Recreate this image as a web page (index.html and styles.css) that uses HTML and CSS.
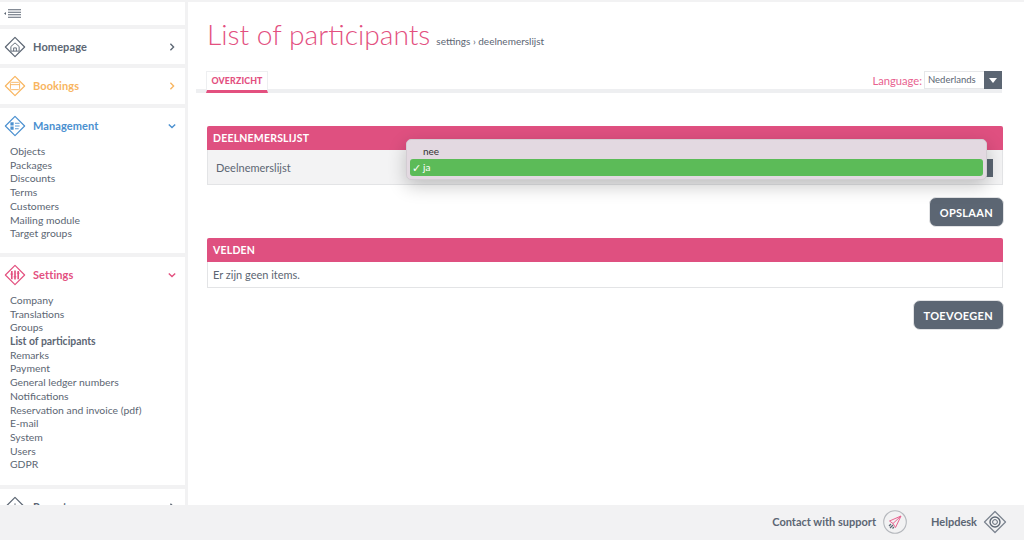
FILE: index.html
```html
<!DOCTYPE html>
<html lang="en">
<head>
<meta charset="utf-8">
<title>List of participants</title>
<link rel="stylesheet" href="styles.css">
</head>
<body>
<div class="app">
  <aside class="sidebar">
    <div class="toggle">
      <svg width="18" height="9" viewBox="0 0 18 9"><path d="M0 4.500l2-1.500v3z" fill="#5c6673"/><path d="M4 .7h13M4 3.200h13M4 5.700h13M4 8.200h13" stroke="#5c6673" stroke-width="1.100"/></svg>
    </div>
    <section class="nav-group home">
      <div class="nav-head">
        <svg class="nav-icon" viewBox="0 0 24 24"><path class="o" d="M12 1.500L22.500 12 12 22.500 1.500 12z"/><path class="i" d="M7.500 11.500L12 7.500l4.500 4v5h-9zM10.500 16.500v-3.500h3v3.500"/></svg>
        <span class="nav-title">Homepage</span>
        <svg class="chev" viewBox="0 0 8 10"><path d="M2 1l4 4-4 4"/></svg>
      </div>
    </section>
    <section class="nav-group book">
      <div class="nav-head">
        <svg class="nav-icon" viewBox="0 0 24 24"><path class="o" d="M12 1.500L22.500 12 12 22.500 1.500 12z"/><rect class="i" x="7" y="8" width="10" height="8" rx="1"/><path class="i" d="M7 10.500h10"/></svg>
        <span class="nav-title">Bookings</span>
        <svg class="chev" viewBox="0 0 8 10"><path d="M2 1l4 4-4 4"/></svg>
      </div>
    </section>
    <section class="nav-group manage">
      <div class="nav-head">
        <svg class="nav-icon" viewBox="0 0 24 24"><path class="o" d="M12 1.500L22.500 12 12 22.500 1.500 12z"/><path class="f" d="M7 8h3.500v3.500H7zM7 12.500h3.500V16H7z"/><path class="i" d="M12 9h5M12 12h5M12 15h4"/></svg>
        <span class="nav-title">Management</span>
        <svg class="chev" viewBox="0 0 10 8"><path d="M1 2l4 4 4-4"/></svg>
      </div>
      <ul class="nav-list">
        <li>Objects</li><li>Packages</li><li>Discounts</li><li>Terms</li><li>Customers</li><li>Mailing module</li><li>Target groups</li>
      </ul>
    </section>
    <section class="nav-group settings">
      <div class="nav-head">
        <svg class="nav-icon" viewBox="0 0 24 24"><path class="o" d="M12 1.500L22.500 12 12 22.500 1.500 12z"/><path class="i thick" d="M8.500 7.500v9M12 7v10M15.500 7.500v9"/><path class="i" d="M7 11h3M10.500 14h3M14 10h3"/></svg>
        <span class="nav-title">Settings</span>
        <svg class="chev" viewBox="0 0 10 8"><path d="M1 2l4 4 4-4"/></svg>
      </div>
      <ul class="nav-list">
        <li>Company</li><li>Translations</li><li>Groups</li><li class="current">List of participants</li><li>Remarks</li><li>Payment</li><li>General ledger numbers</li><li>Notifications</li><li>Reservation and invoice (pdf)</li><li>E-mail</li><li>System</li><li>Users</li><li>GDPR</li>
      </ul>
    </section>
    <section class="nav-group home">
      <div class="nav-head">
        <svg class="nav-icon" viewBox="0 0 24 24"><path class="o" d="M12 1.500L22.500 12 12 22.500 1.500 12z"/><path class="i" d="M8 16v-4M12 16V8M16 16v-6"/></svg>
        <span class="nav-title">Report</span>
        <svg class="chev" viewBox="0 0 8 10"><path d="M2 1l4 4-4 4"/></svg>
      </div>
    </section>
  </aside>

  <main class="content">
    <header class="page-head">
      <h1>List of participants</h1>
      <span class="crumbs">settings › deelnemerslijst</span>
    </header>
    <div class="tabs">
      <div class="tab">OVERZICHT</div>
      <div class="lang">
        <span class="lang-label">Language:</span>
        <div class="lang-select">
          <span class="lang-value">Nederlands</span>
          <span class="lang-arrow"><svg width="8" height="5" viewBox="0 0 8 5"><path d="M0 0h8L4 5z" fill="#fff"/></svg></span>
        </div>
      </div>
    </div>

    <section class="panel first">
      <div class="panel-head">DEELNEMERSLIJST</div>
      <div class="panel-body grey">
        <span>Deelnemerslijst</span>
        <span class="select-stub"></span>
      </div>
      <div class="popup">
        <div class="opt">nee</div>
        <div class="opt on"><span class="tick">✓</span>ja</div>
      </div>
    </section>
    <div class="actions"><button class="btn">OPSLAAN</button></div>

    <section class="panel">
      <div class="panel-head">VELDEN</div>
      <div class="panel-body">Er zijn geen items.</div>
    </section>
    <div class="actions"><button class="btn">TOEVOEGEN</button></div>
  </main>
</div>

<footer class="footer">
  <span class="foot-link">Contact with support</span>
  <svg class="foot-send" width="24" height="24" viewBox="0 0 24 24"><circle cx="12" cy="12" r="11.300" fill="none" stroke="#b5b8bd" stroke-width="1.100"/><path d="M18 6L6.500 11l3.500 2.500L12.500 17.500zM18 6L10 13.500" fill="none" stroke="#e8628f" stroke-width="1"/><path d="M6 16l2-2M7 18l3-3M9.500 18.500l1.500-1.500" stroke="#5c6673" stroke-width="1.200"/></svg>
  <span class="foot-link help">Helpdesk</span>
  <svg class="foot-help" width="24" height="24" viewBox="0 0 24 24"><path d="M12 1.500L22.500 12 12 22.500 1.500 12z" fill="none" stroke="#7d8590" stroke-width="1.300" stroke-linejoin="round"/><circle cx="12" cy="12" r="5" fill="none" stroke="#5c6673" stroke-width="1.400"/><circle cx="12" cy="12" r="2.400" fill="none" stroke="#5c6673" stroke-width="1"/></svg>
</footer>
</body>
</html>
```
FILE: styles.css
```css
* { box-sizing: border-box; }
html, body { margin: 0; height: 540px; overflow: hidden; }
body {
  position: relative;
  background: #f2f2f3;
  font-family: "Lato", "Open Sans", sans-serif;
  color: #5c6673;
}
.app { display: flex; height: 540px; padding-top: 2px; gap: 3px; }

.sidebar { width: 185px; flex: none; display: flex; flex-direction: column; gap: 4px; }
.toggle { background: #fff; height: 23px; padding: 7px 0 0 4px; }
.toggle svg { display: block; }
.nav-group { background: #fff; flex: none; }
.nav-head { height: 36px; display: flex; align-items: center; padding: 0 9px 1px 4px; }
.home .nav-head { height: 35px; padding-bottom: 0; }
.nav-icon { width: 22px; height: 22px; flex: none; }
.nav-icon .o, .nav-icon .i { fill: none; stroke: currentColor; stroke-linejoin: round; }
.nav-icon .o { stroke-width: 1.300; }
.nav-icon .i { stroke-width: 1; }
.nav-icon .thick { stroke-width: 1.800; }
.nav-icon .f { fill: currentColor; }
.nav-title { margin-left: 7px; flex: 1; font-size: 11px; font-weight: 700; letter-spacing: .1px; }
.chev { width: 8px; height: 8px; flex: none; fill: none; stroke: currentColor; stroke-width: 1.700; }
.home { color: #5c6673; }
.book { color: #f8b55f; }
.manage { color: #4a90d0; }
.settings { color: #e3507f; }
.settings .nav-head { padding-bottom: 0; }
.nav-list { list-style: none; margin: 0; padding: 1px 0 12px 10px; color: #5c6673; font-size: 10.400px; line-height: 13.700px; }
.settings .nav-list { padding-bottom: 13px; }
.current { font-weight: 700; }

.content { flex: 1; background: #fff; padding: 0 21px 0 8px; min-width: 0; }
.page-head { display: flex; align-items: baseline; height: 70px; padding: 14px 0 0 11px; }
h1 { margin: 0; color: #e3507f; font-size: 28.200px; line-height: 36px; font-weight: 300; letter-spacing: 0; }
.crumbs { margin-left: 6px; font-size: 10px; }
.tabs { display: flex; justify-content: space-between; height: 22px; border-bottom: 4px solid #eeeff1; margin: -1px 1px 0 0; }
.tab {
  margin-left: 10px; width: 62px; height: 22px; background: #fff;
  border: 1px solid #eeeff1; border-bottom: 3px solid #e3507f;
  color: #e3507f; font-size: 8.800px; font-weight: 900; letter-spacing: .15px;
  text-align: center; line-height: 17px;
}
.lang { display: flex; align-items: center; height: 18px; }
.lang-label { color: #e8628f; font-size: 11.200px; margin-right: 2px; }
.lang-select { display: flex; width: 78px; height: 18px; border: 1px solid #e6e7e9; background: #fff; font-size: 9.500px; }
.lang-value { flex: 1; padding-left: 3px; line-height: 16px; }
.lang-arrow { width: 18px; background: #5c6673; display: flex; align-items: center; justify-content: center; margin: -1px -1px -1px 0; }

.panel { margin-left: 11px; position: relative; }
.panel.first { margin-top: 33px; }
.panel-head { height: 24px; background: #df5080; border-radius: 2px 2px 0 0; color: #fff; font-size: 10.500px; font-weight: 700; letter-spacing: .2px; line-height: 24px; padding-left: 6px; }
.panel-body { height: 26px; background: #fff; border: 1px solid #e3e4e6; border-top: 0; font-size: 11px; line-height: 25px; padding-left: 5px; }
.panel-body.grey { height: 35px; background: #f3f3f4; padding-left: 8px; line-height: 35px; position: relative; }
.select-stub { position: absolute; left: 770px; top: 9px; width: 15px; height: 18px; background: #5c6673; }
.popup {
  position: absolute; left: 199px; top: 13px; width: 581px; height: 41px;
  background: #e3d9e1; border: 1px solid #d3cdd3; border-radius: 5px; padding: 3px;
  box-shadow: 0 6px 18px rgba(0,0,0,.22); font-size: 10px; color: #333;
}
.opt { height: 16px; line-height: 16px; padding-left: 13px; }
.opt.on { position: relative; height: 17px; background: #5cbb58; border-radius: 3px; color: #fff; line-height: 17px; }
.tick { position: absolute; left: 2px; font-size: 11px; }
.actions { display: flex; justify-content: flex-end; margin: 12px -1px 11px 0; }
.btn {
  height: 30px; padding: 0 10px; border: 1px solid #e2e3e5; border-radius: 7px;
  background: #5c6673; color: #fff; font: 700 11px "Lato", sans-serif; letter-spacing: .3px;
}

.footer {
  position: absolute; left: 0; right: 0; bottom: 0; height: 35px;
  display: flex; align-items: center; justify-content: flex-end;
  padding: 0 17px 2px 0; background: #f2f2f3; font-size: 11px; font-weight: 700;
}
.foot-send { margin-left: 7px; }
.help { margin-left: 24px; }
.foot-help { margin-left: 6px; }
```
